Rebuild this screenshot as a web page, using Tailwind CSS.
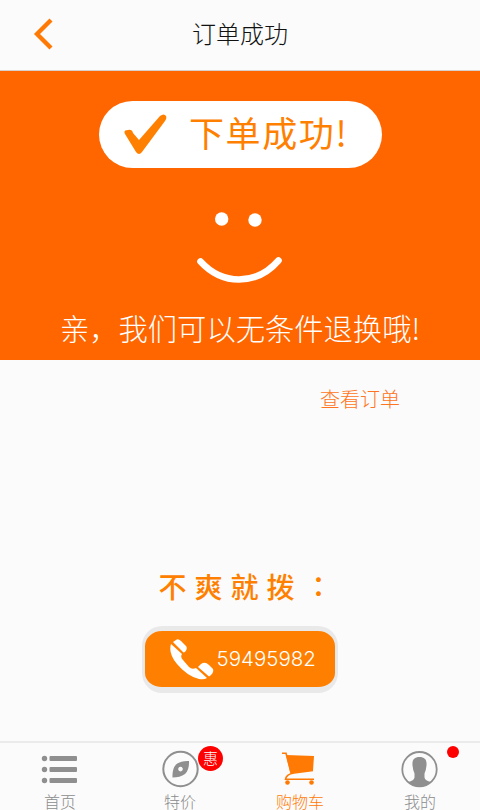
<!DOCTYPE html>
<html lang="zh-CN">
<head>
<meta charset="utf-8">
<meta name="viewport" content="width=device-width, initial-scale=1">
<title>订单成功</title>
<script src="https://cdn.jsdelivr.net/npm/@tailwindcss/browser@4"></script>
</head>
<body class="flex h-[810px] w-[480px] flex-col overflow-hidden bg-[#fbfbfb] font-['Noto_Sans_CJK_SC',sans-serif] font-light">
  <header class="grid h-[71px] shrink-0 grid-cols-[80px_1fr_80px] items-center border-b border-[#d8d0cc] pb-[3px]">
    <button class="pl-[33px]" aria-label="返回">
      <svg class="h-8 w-5" viewBox="0 0 20 32" fill="none" stroke="#ff7a05" stroke-width="4.300"><path d="M18 2 4 16 18 30"/></svg>
    </button>
    <h1 class="pb-[2px] text-center text-[24px] leading-[34px] text-[#111]">订单成功</h1>
  </header>

  <section class="flex h-[289px] shrink-0 flex-col items-center bg-[#ff6600] pt-[30px]">
    <div class="ml-px flex h-[67px] w-[283px] items-center rounded-full bg-white pl-[25px]">
      <svg class="h-[42px] w-[43px] shrink-0" viewBox="0 0 43 42" fill="#ff8000"><path d="M1 20Q-1 16 4 16Q8 15 9 19L15 26L36 2Q40-1 42 2Q43 4 41 7L18 38Q15 42 12 38Z"/></svg>
      <p class="ml-[22px] pb-[5px] whitespace-nowrap text-[35px] leading-[52px] font-normal tracking-[1.600px] text-[#ff8000]">下单成功!</p>
    </div>
    <svg class="mt-[42px] h-[76px] w-[88px]" viewBox="0 0 88 76"><g fill="#fff"><circle cx="25.700" cy="9" r="6.700"/><circle cx="59" cy="10" r="6.700"/></g><path d="M4.500 51.500Q21 69.500 43 69.500Q66 69.500 82.500 50.500" fill="none" stroke="#fff" stroke-width="6.600" stroke-linecap="round"/></svg>
    <p class="mt-[20px] whitespace-nowrap text-[29.300px] leading-[42px] text-white">亲，我们可以无条件退换哦!</p>
  </section>

  <main class="flex grow flex-col">
    <a class="mt-[24px] mr-[80px] self-end text-[20px] leading-[30px] text-[#ff7420]">查看订单</a>
    <div class="mt-[152px] flex flex-col items-center">
      <p class="ml-[15px] flex h-[40px] items-center text-[28px] leading-[40px] font-medium tracking-[8px] whitespace-nowrap text-[#ff8000]"><span class="w-[153px]">不爽就拨</span><span class="w-[25px] pb-[5px]">：</span></p>
      <button class="mt-[20px] mr-[1px] flex h-[67px] w-[196px] items-center rounded-[20px] border-[3px] border-t-[5px] border-b-[6px] border-[#e9e9e9] bg-[#ff8000] pl-[24px]">
        <svg class="h-[42px] w-[46px] shrink-0" viewBox="0 0 46 42" fill="#fff"><path d="M2 6Q-1 15 8 26Q18 38 30 41Q35 42 38 40L27 30Q23 32 20 29L14 22Q11 19 13 16Z"/><path d="M4 4 7 2Q9 0 12 3L17 8Q19 10 16 14L14.500 14.500Z"/><path d="M29 29 32 26Q36 23 40 27L44 31Q45 34 42 37L40 38.500Z"/></svg>
        <span class="ml-[2px] font-['Inter','Roboto',sans-serif] text-[20.500px] font-light text-white">59495982</span>
      </button>
    </div>
  </main>

  <nav class="grid h-[69px] shrink-0 grid-cols-4 border-t-2 border-[#ebebeb] text-[16px] leading-[16px] text-[#8c8c8c]">
    <a class="flex flex-col items-center pt-[7px]">
      <svg class="mb-[5px] h-[38px] w-10 shrink-0" viewBox="0 0 40 38" fill="#8f8f8f"><circle cx="4.500" cy="8.500" r="2.700"/><circle cx="4.500" cy="19.500" r="2.700"/><circle cx="4.500" cy="30.500" r="2.700"/><rect x="9.500" y="6" width="27.500" height="5" rx="1"/><rect x="9.500" y="17" width="27.500" height="5" rx="1"/><rect x="9.500" y="28" width="27.500" height="5" rx="1"/></svg>
      <span>首页</span>
    </a>
    <a class="relative flex flex-col items-center pt-[7px]">
      <svg class="mb-[5px] h-[38px] w-10 shrink-0" viewBox="0 0 40 38"><circle cx="20.500" cy="19" r="17.200" fill="none" stroke="#8f8f8f" stroke-width="2"/><path fill="#8f8f8f" fill-rule="evenodd" d="M29 11Q29.500 19.500 25 24Q20 27.500 12.500 27.500Q12 19 16 14.500Q21 10.500 29 11ZM20.500 16.800a2.300 2.300 0 1 0 .01 0Z"/></svg>
      <span>特价</span>
      <b class="absolute top-[3px] left-[78px] flex size-[25px] items-center justify-center rounded-full bg-[#ff0000] pb-[2px] text-[15px] leading-none font-light text-white">惠</b>
    </a>
    <a class="flex flex-col items-center pt-[7px] text-[#ff7a05]">
      <svg class="mb-[5px] h-[38px] w-10 shrink-0" viewBox="0 0 40 38"><path d="M6 5 34 6 33 20.500 10.500 23.500Z" fill="#ff7a05"/><path d="M2 3.200H6L11 22.500M33 20.500 14 23Q6 24.500 5.500 29.300H34" fill="none" stroke="#ff7a05" stroke-width="1.600"/><circle cx="7.500" cy="32.500" r="2.300" fill="#ff7a05"/><circle cx="31.500" cy="32.500" r="2.300" fill="#ff7a05"/></svg>
      <span>购物车</span>
    </a>
    <a class="relative flex flex-col items-center pt-[7px]">
      <svg class="mb-[5px] h-[38px] w-10 shrink-0" viewBox="0 0 40 38"><circle cx="19.500" cy="19.200" r="17.200" fill="none" stroke="#8f8f8f" stroke-width="1.800"/><path fill="#8f8f8f" d="M19.500 7C24.500 7 27 9.500 26.500 15.500Q26 20.500 24.500 23.500V27.500Q25 30.500 31 32Q26 36.500 19.500 36.500Q13 36.500 8 32Q14 30.500 14.500 27.500V23.500Q13 20.500 12.500 15.500C12 9.500 14.500 7 19.500 7Z"/></svg>
      <span>我的</span>
      <i class="absolute top-[3px] left-[87px] size-[12px] rounded-full bg-[#ff0000]"></i>
    </a>
  </nav>
</body>
</html>
